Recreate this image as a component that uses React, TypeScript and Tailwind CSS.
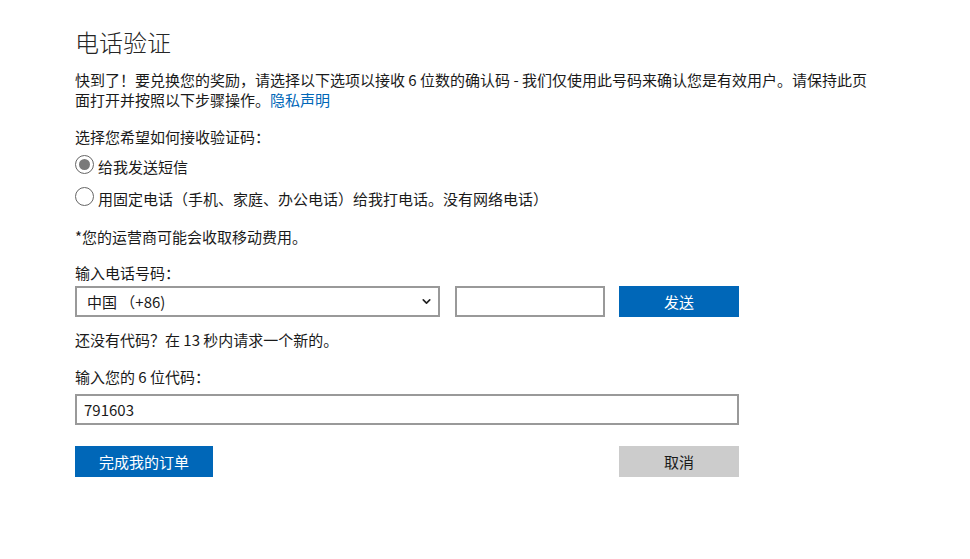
import { ChevronDown } from "lucide-react"

const font = { fontFamily: '"Segoe UI", "Noto Sans CJK SC", "Noto Sans", sans-serif' }

function Radio({ checked, label }: { checked?: boolean; label: string }) {
  return (
    <label className="flex items-center h-5 text-[15px] leading-5 text-[#1a1a1a]">
      <span className="relative -mt-[6px] mr-1 flex h-[19px] w-[19px] items-center justify-center rounded-full border border-[#666]">
        {checked && <span className="h-[11px] w-[11px] rounded-full bg-[#7a7a7a]" />}
      </span>
      {label}
    </label>
  )
}

export default function App() {
  return (
    <div className="min-h-[559px] bg-white" style={font}>
      <div className="pl-[75px] pt-[26px] w-[876px] text-[15px] leading-5 text-[#1a1a1a]">
        {/* Title */}
        <h1 className="text-[24px] leading-8 font-light text-[#262626]">电话验证</h1>

        <p className="mt-3">
          快到了！要兑换您的奖励，请选择以下选项以接收 6 位数的确认码 - 我们仅使用此号码来确认您是有效用户。请保持此页面打开并按照以下步骤操作。
          <a href="#" className="text-[#0067b8]">隐私声明</a>
        </p>

        <p className="mt-[17px]">选择您希望如何接收验证码：</p>

        <div className="mt-[10px] flex flex-col gap-3">
          <Radio checked label="给我发送短信" />
          <Radio label="用固定电话（手机、家庭、办公电话）给我打电话。没有网络电话）" />
        </div>

        <p className="mt-[18px]">*您的运营商可能会收取移动费用。</p>

        <p className="mt-4">输入电话号码：</p>

        {/* Phone row */}
        <div className="mt-[3px] flex items-center">
          <div className="relative flex h-[31px] w-[365px] items-center border-2 border-[#999] pl-[10px]">
            <span>中国 （+86)</span>
            <ChevronDown className="absolute right-[5px] h-[13px] w-[13px] text-[#222]" strokeWidth={3} />
          </div>
          <div className="ml-[15px] h-[31px] w-[150px] border-2 border-[#999]" />
          <button className="ml-[14px] h-[31px] w-[120px] bg-[#0067b8] text-white">发送</button>
        </div>

        <p className="mt-[13px]">还没有代码？在 13 秒内请求一个新的。</p>

        <p className="mt-[17px]">输入您的 6 位代码：</p>

        <div className="mt-[7px] flex h-[31px] w-[664px] items-center border-2 border-[#999] pl-[7px]">
          791603
        </div>

        {/* Actions */}
        <div className="mt-[21px] flex w-[664px] justify-between">
          <button className="h-[31px] w-[138px] bg-[#0067b8] text-white">完成我的订单</button>
          <button className="h-[31px] w-[120px] bg-[#cccccc] text-[#1a1a1a]">取消</button>
        </div>
      </div>
    </div>
  )
}
